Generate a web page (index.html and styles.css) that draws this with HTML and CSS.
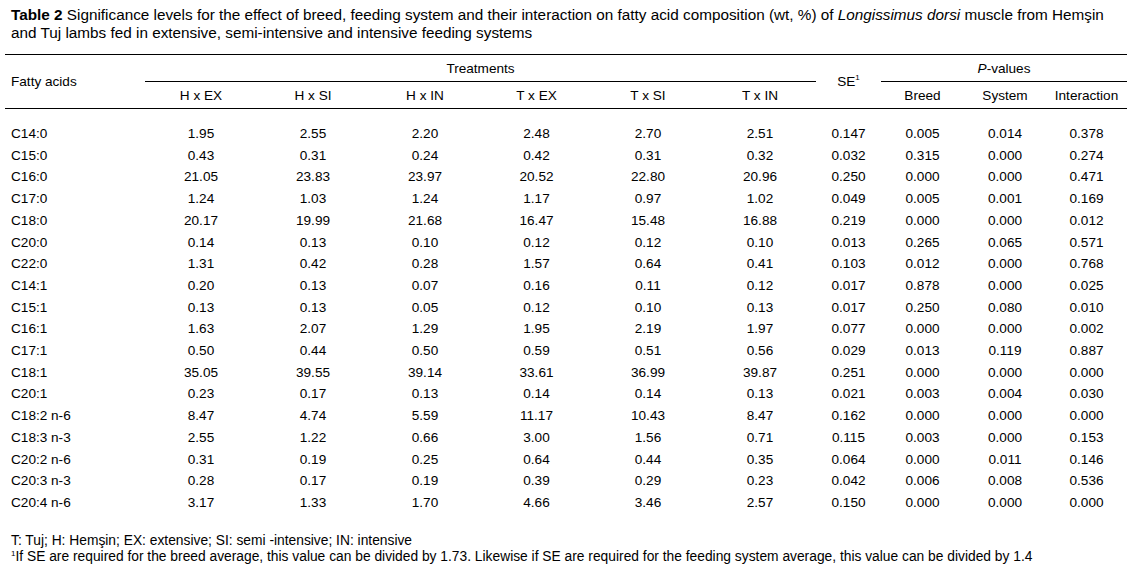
FILE: index.html
```html
<!DOCTYPE html>
<html>
<head>
<meta charset="utf-8">
<link rel="stylesheet" href="styles.css">
</head>
<body>
<p class="caption"><b>Table 2</b> Significance levels for the effect of breed, feeding system and their interaction on fatty acid composition (wt, %) of <i>Longissimus dorsi</i> muscle from Hemşin and Tuj lambs fed in extensive, semi-intensive and intensive feeding systems</p>
<table class="data">
<colgroup>
<col class="c-name"><col class="c-t"><col class="c-t"><col class="c-t"><col class="c-t2"><col class="c-t"><col class="c-t"><col class="c-se"><col class="c-p1"><col class="c-p2"><col class="c-p3">
</colgroup>
<thead>
<tr class="h1">
<th rowspan="2" class="name top bot">Fatty acids</th>
<th colspan="6" class="top under">Treatments</th>
<th rowspan="2" class="top bot">SE<sup>1</sup></th>
<th colspan="3" class="top under"><i>P</i>-values</th>
</tr>
<tr class="h2">
<th class="bot">H x EX</th><th class="bot">H x SI</th><th class="bot">H x IN</th><th class="bot">T x EX</th><th class="bot">T x SI</th><th class="bot">T x IN</th>
<th class="bot">Breed</th><th class="bot">System</th><th class="bot">Interaction</th>
</tr>
</thead>
<tbody>
<tr><td>C14:0</td><td>1.95</td><td>2.55</td><td>2.20</td><td>2.48</td><td>2.70</td><td>2.51</td><td>0.147</td><td>0.005</td><td>0.014</td><td>0.378</td></tr>
<tr><td>C15:0</td><td>0.43</td><td>0.31</td><td>0.24</td><td>0.42</td><td>0.31</td><td>0.32</td><td>0.032</td><td>0.315</td><td>0.000</td><td>0.274</td></tr>
<tr><td>C16:0</td><td>21.05</td><td>23.83</td><td>23.97</td><td>20.52</td><td>22.80</td><td>20.96</td><td>0.250</td><td>0.000</td><td>0.000</td><td>0.471</td></tr>
<tr><td>C17:0</td><td>1.24</td><td>1.03</td><td>1.24</td><td>1.17</td><td>0.97</td><td>1.02</td><td>0.049</td><td>0.005</td><td>0.001</td><td>0.169</td></tr>
<tr><td>C18:0</td><td>20.17</td><td>19.99</td><td>21.68</td><td>16.47</td><td>15.48</td><td>16.88</td><td>0.219</td><td>0.000</td><td>0.000</td><td>0.012</td></tr>
<tr><td>C20:0</td><td>0.14</td><td>0.13</td><td>0.10</td><td>0.12</td><td>0.12</td><td>0.10</td><td>0.013</td><td>0.265</td><td>0.065</td><td>0.571</td></tr>
<tr><td>C22:0</td><td>1.31</td><td>0.42</td><td>0.28</td><td>1.57</td><td>0.64</td><td>0.41</td><td>0.103</td><td>0.012</td><td>0.000</td><td>0.768</td></tr>
<tr><td>C14:1</td><td>0.20</td><td>0.13</td><td>0.07</td><td>0.16</td><td>0.11</td><td>0.12</td><td>0.017</td><td>0.878</td><td>0.000</td><td>0.025</td></tr>
<tr><td>C15:1</td><td>0.13</td><td>0.13</td><td>0.05</td><td>0.12</td><td>0.10</td><td>0.13</td><td>0.017</td><td>0.250</td><td>0.080</td><td>0.010</td></tr>
<tr><td>C16:1</td><td>1.63</td><td>2.07</td><td>1.29</td><td>1.95</td><td>2.19</td><td>1.97</td><td>0.077</td><td>0.000</td><td>0.000</td><td>0.002</td></tr>
<tr><td>C17:1</td><td>0.50</td><td>0.44</td><td>0.50</td><td>0.59</td><td>0.51</td><td>0.56</td><td>0.029</td><td>0.013</td><td>0.119</td><td>0.887</td></tr>
<tr><td>C18:1</td><td>35.05</td><td>39.55</td><td>39.14</td><td>33.61</td><td>36.99</td><td>39.87</td><td>0.251</td><td>0.000</td><td>0.000</td><td>0.000</td></tr>
<tr><td>C20:1</td><td>0.23</td><td>0.17</td><td>0.13</td><td>0.14</td><td>0.14</td><td>0.13</td><td>0.021</td><td>0.003</td><td>0.004</td><td>0.030</td></tr>
<tr><td>C18:2 n-6</td><td>8.47</td><td>4.74</td><td>5.59</td><td>11.17</td><td>10.43</td><td>8.47</td><td>0.162</td><td>0.000</td><td>0.000</td><td>0.000</td></tr>
<tr><td>C18:3 n-3</td><td>2.55</td><td>1.22</td><td>0.66</td><td>3.00</td><td>1.56</td><td>0.71</td><td>0.115</td><td>0.003</td><td>0.000</td><td>0.153</td></tr>
<tr><td>C20:2 n-6</td><td>0.31</td><td>0.19</td><td>0.25</td><td>0.64</td><td>0.44</td><td>0.35</td><td>0.064</td><td>0.000</td><td>0.011</td><td>0.146</td></tr>
<tr><td>C20:3 n-3</td><td>0.28</td><td>0.17</td><td>0.19</td><td>0.39</td><td>0.29</td><td>0.23</td><td>0.042</td><td>0.006</td><td>0.008</td><td>0.536</td></tr>
<tr><td>C20:4 n-6</td><td>3.17</td><td>1.33</td><td>1.70</td><td>4.66</td><td>3.46</td><td>2.57</td><td>0.150</td><td>0.000</td><td>0.000</td><td>0.000</td></tr>
</tbody>
</table>
<div class="notes">
<p>T: Tuj; H: Hemşin; EX: extensive; SI: semi -intensive; IN: intensive</p>
<p><sup>1</sup>If SE are required for the breed average, this value can be divided by 1.73. Likewise if SE are required for the feeding system average, this value can be divided by 1.4</p>
</div>
</body>
</html>
```
FILE: styles.css
```css
html, body {
  margin: 0;
  padding: 0;
  background: #fff;
  color: #000;
  font-family: "Liberation Sans", Arial, sans-serif;
}

.caption {
  margin: 0;
  padding: 6px 11px 0 11px;
  font-size: 15.3px;
  line-height: 18px;
}

.data {
  margin: 12px 0 0 5px;
  width: 1122px;
  border-collapse: separate;
  border-spacing: 0;
  table-layout: fixed;
  font-size: 13.6px;
}

.c-name { width: 140px; }
.c-t { width: 112px; }
.c-t2 { width: 111px; }
.c-se { width: 65px; }
.c-p1 { width: 83px; }
.c-p2 { width: 82px; }
.c-p3 { width: 81px; }

.data th {
  font-weight: normal;
  text-align: center;
  padding: 0;
  white-space: nowrap;
}

.data .h1 th { height: 26px; }
.data .h2 th { height: 26px; }

.data th.name {
  text-align: left;
  padding-left: 6px;
}

.data .top { border-top: 1px solid #000; }
.data .under { border-bottom: 1px solid #000; }
.data .bot { border-bottom: 1px solid #000; }

.data sup {
  font-size: 8px;
  vertical-align: 6px;
  line-height: 0;
}

.data td {
  padding: 0;
  text-align: center;
  line-height: 21.7px;
  height: 21.7px;
  white-space: nowrap;
}

.data td:first-child {
  text-align: left;
  padding-left: 6px;
}

.data tbody tr:first-child td {
  padding-top: 14px;
}

.notes {
  margin-top: 19px;
  padding-left: 11px;
  font-size: 13.8px;
  line-height: 16px;
}

.notes p { margin: 0; }

.notes sup {
  font-size: 8px;
  vertical-align: 5px;
  line-height: 0;
}
```
